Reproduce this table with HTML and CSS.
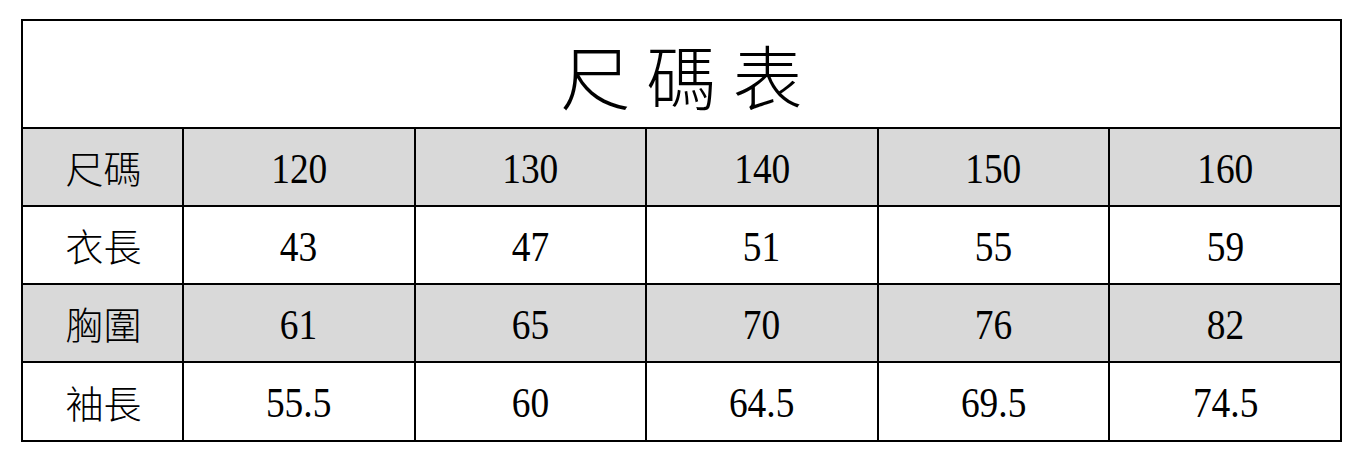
FILE: index.html
```html
<!DOCTYPE html>
<html lang="zh-Hant">
<head>
<meta charset="utf-8">
<title>尺碼表</title>
<link rel="stylesheet" href="styles.css">
</head>
<body>
<div class="chart">
  <div class="title"><span class="title-text">尺碼表</span></div>

  <div class="cell gray label">尺碼</div>
  <div class="cell gray"><span class="num">120</span></div>
  <div class="cell gray"><span class="num">130</span></div>
  <div class="cell gray"><span class="num">140</span></div>
  <div class="cell gray"><span class="num">150</span></div>
  <div class="cell gray"><span class="num">160</span></div>

  <div class="cell label">衣長</div>
  <div class="cell"><span class="num">43</span></div>
  <div class="cell"><span class="num">47</span></div>
  <div class="cell"><span class="num">51</span></div>
  <div class="cell"><span class="num">55</span></div>
  <div class="cell"><span class="num">59</span></div>

  <div class="cell gray label">胸圍</div>
  <div class="cell gray"><span class="num">61</span></div>
  <div class="cell gray"><span class="num">65</span></div>
  <div class="cell gray"><span class="num">70</span></div>
  <div class="cell gray"><span class="num">76</span></div>
  <div class="cell gray"><span class="num">82</span></div>

  <div class="cell label">袖長</div>
  <div class="cell"><span class="num">55.5</span></div>
  <div class="cell"><span class="num">60</span></div>
  <div class="cell"><span class="num">64.5</span></div>
  <div class="cell"><span class="num">69.5</span></div>
  <div class="cell"><span class="num">74.5</span></div>
</div>
</body>
</html>
```

FILE: styles.css
```css
html, body {
  margin: 0;
  padding: 0;
  background: #ffffff;
}

body {
  padding: 19px 0 0 21px;
  font-family: "Liberation Serif", "Noto Sans CJK TC", serif;
  color: #000000;
}

.chart {
  width: 1321px;
  box-sizing: border-box;
  display: grid;
  grid-template-columns: 159px repeat(5, 1fr);
  grid-template-rows: 106px 76px 76px 76px 77px;
  gap: 2px;
  padding: 2px;
  background: #000000;
}

.title {
  grid-column: 1 / -1;
  background: #ffffff;
  display: flex;
  align-items: center;
  justify-content: center;
}

.title-text {
  font-family: "Noto Sans CJK TC", sans-serif;
  font-weight: 300;
  font-size: 70px;
  line-height: 1;
  letter-spacing: 16px;
  padding-left: 16px;
  margin-top: 2px;
}

.cell {
  background: #ffffff;
  display: flex;
  align-items: center;
  justify-content: center;
}

.cell.gray {
  background: #d9d9d9;
}

.label {
  font-family: "Noto Sans CJK TC", sans-serif;
  font-weight: 300;
  font-size: 38px;
  line-height: 1;
  padding-left: 2px;
}

.num {
  display: inline-block;
  font-family: "Liberation Serif", serif;
  font-size: 43px;
  line-height: 1;
  transform: scaleX(0.87);
  margin-top: 2px;
}
```
